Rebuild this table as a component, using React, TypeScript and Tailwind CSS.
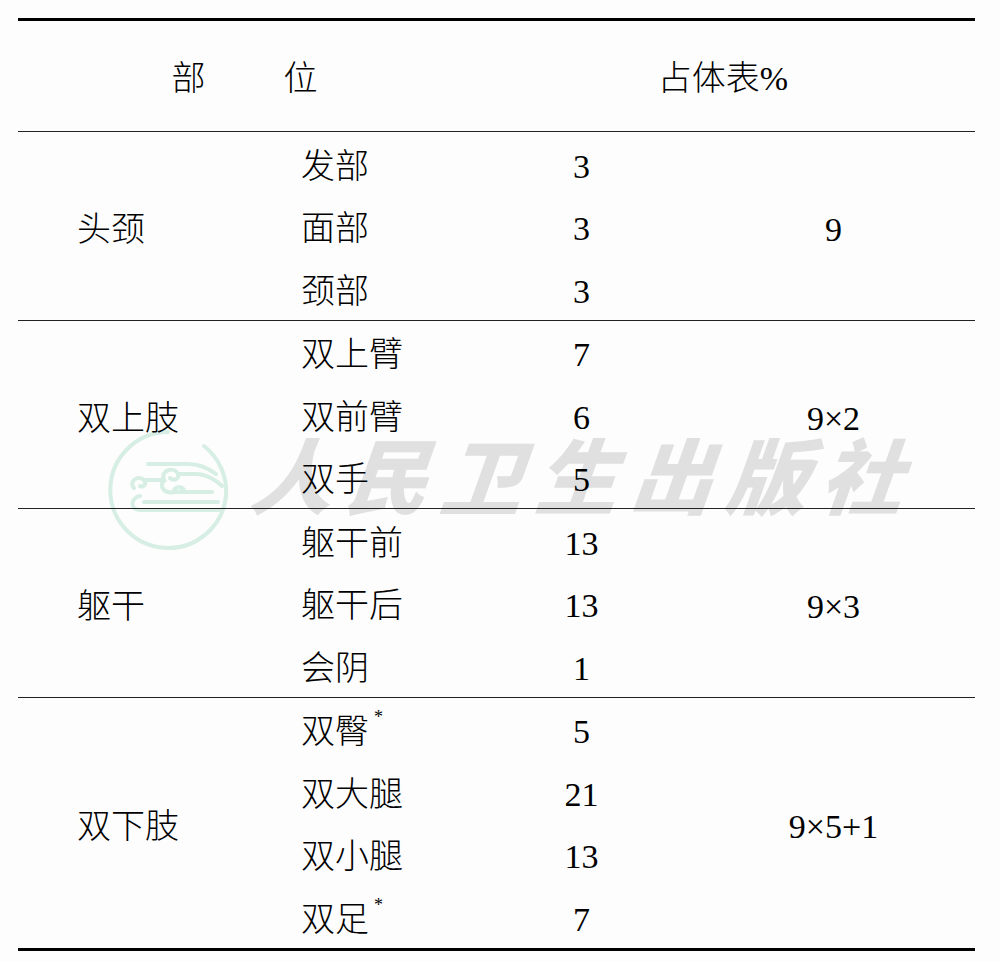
const font = "font-['Liberation_Serif','Noto_Sans_CJK_SC',serif]";

type Row = { part: string; star?: boolean; pct: string };
type Group = { name: string; total: string; rows: Row[] };

const groups: Group[] = [
  {
    name: "头颈",
    total: "9",
    rows: [
      { part: "发部", pct: "3" },
      { part: "面部", pct: "3" },
      { part: "颈部", pct: "3" },
    ],
  },
  {
    name: "双上肢",
    total: "9×2",
    rows: [
      { part: "双上臂", pct: "7" },
      { part: "双前臂", pct: "6" },
      { part: "双手", pct: "5" },
    ],
  },
  {
    name: "躯干",
    total: "9×3",
    rows: [
      { part: "躯干前", pct: "13" },
      { part: "躯干后", pct: "13" },
      { part: "会阴", pct: "1" },
    ],
  },
  {
    name: "双下肢",
    total: "9×5+1",
    rows: [
      { part: "双臀", star: true, pct: "5" },
      { part: "双大腿", pct: "21" },
      { part: "双小腿", pct: "13" },
      { part: "双足", star: true, pct: "7" },
    ],
  },
];

function Watermark() {
  return (
    <div className="absolute left-[104px] top-[426px] flex items-start gap-[20px] pointer-events-none select-none">
      {/* logo */}
      <svg width="128" height="128" viewBox="0 0 128 128" fill="none" stroke="#d6eee4" strokeWidth="4" strokeLinecap="round">
        <path d="M64 6 A58 58 0 1 0 122 70" />
        <path d="M122 70 A58 58 0 0 0 100 20" />
        <path d="M30 62 C24 56 34 48 40 54 C44 58 38 62 36 60" />
        <path d="M36 70 C26 72 26 84 36 84 L118 84" />
        <path d="M40 54 L60 54 C56 44 70 40 74 48 C76 52 70 56 66 52" />
        <path d="M60 54 C54 62 62 68 70 66 L108 66" />
        <path d="M44 38 L84 38 C94 38 104 42 112 48" />
        <path d="M74 48 L92 48 C102 48 112 54 118 60" />
        <path d="M40 76 L114 76" />
        <path d="M70 66 C70 60 78 60 80 64" />
      </svg>
      <div className="mt-[6px] text-[82px] leading-none font-black italic text-[#e0e0e0] tracking-[13px] font-['Noto_Sans_CJK_SC',sans-serif] -skew-x-6">
        人民卫生出版社
      </div>
    </div>
  );
}

export default function App() {
  return (
    <div className={`relative w-[1000px] h-[961px] bg-[#fdfdfd] text-black font-light ${font}`}>
      <Watermark />

      <div className="relative pt-[18px] px-[18px]">
        <div className="w-[957px] border-t-[3px] border-b-[3px] border-black">
          {/* header */}
          <div className="h-[111px] flex items-center border-b border-[#222] text-[34px]">
            <div className="w-[453px] flex justify-center gap-[78px] translate-y-[2px]">
              <span>部</span>
              <span>位</span>
            </div>
            <div className="flex-1 flex justify-center translate-y-[2px]">占体表%</div>
          </div>

          {groups.map((g, gi) => (
            <div
              key={g.name}
              className={`flex items-center text-[34px] ${gi < groups.length - 1 ? "border-b border-[#222]" : ""}`}
            >
              <div className="w-[242px] pl-[59px] translate-y-[4px]">{g.name}</div>
              <div className="w-[422px] flex flex-col">
                {g.rows.map((r) => (
                  <div key={r.part} className="h-[62.5px] flex items-center translate-y-[3px]">
                    <div className="w-[211px] pl-[41px] flex items-start">
                      {r.part}
                      {r.star && <span className="text-[18px] ml-[5px] leading-none mt-[2px]">*</span>}
                    </div>
                    <div className="w-[211px] text-center translate-x-[5px]">{r.pct}</div>
                  </div>
                ))}
              </div>
              <div className="flex-1 text-center translate-x-[5px] translate-y-[4px]">{g.total}</div>
            </div>
          ))}
        </div>
      </div>
    </div>
  );
}
